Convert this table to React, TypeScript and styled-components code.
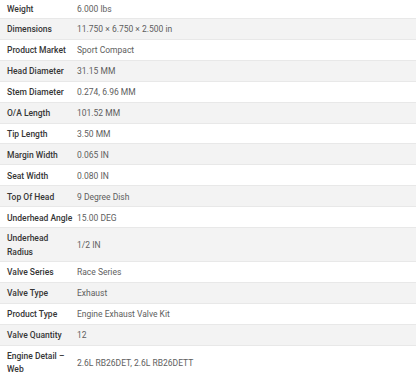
import React from "react";
import styled, { createGlobalStyle } from "styled-components";

const GlobalStyle = createGlobalStyle`
  html, body {
    margin: 0;
    padding: 0;
    background: #ffffff;
  }
  body {
    font-family: Roboto, "Liberation Sans", sans-serif;
    overflow: hidden;
  }
`;

const SpecList = styled.div`
  display: flex;
  flex-direction: column;
  margin-top: -1.9px;
  font-size: 8.5px;
  line-height: 13.1px;
`;

const Row = styled.div<{ $shaded: boolean }>`
  display: grid;
  grid-template-columns: 77px 1fr;
  align-items: center;
  padding: 4.4px 0 2.43px;
  background: ${(p) => (p.$shaded ? "#f3f3f3" : "#ffffff")};
  border-bottom: 1px solid #e8e8e8;
`;

const Label = styled.div`
  padding: 0 4px 0 7px;
  font-weight: 500;
  color: #363636;
`;

const Value = styled.div`
  padding-right: 7px;
  color: #5e5e5e;
`;

const specs: [string, string][] = [
  ["Weight", "6.000 lbs"],
  ["Dimensions", "11.750 × 6.750 × 2.500 in"],
  ["Product Market", "Sport Compact"],
  ["Head Diameter", "31.15 MM"],
  ["Stem Diameter", "0.274, 6.96 MM"],
  ["O/A Length", "101.52 MM"],
  ["Tip Length", "3.50 MM"],
  ["Margin Width", "0.065 IN"],
  ["Seat Width", "0.080 IN"],
  ["Top Of Head", "9 Degree Dish"],
  ["Underhead Angle", "15.00 DEG"],
  ["Underhead Radius", "1/2 IN"],
  ["Valve Series", "Race Series"],
  ["Valve Type", "Exhaust"],
  ["Product Type", "Engine Exhaust Valve Kit"],
  ["Valve Quantity", "12"],
  ["Engine Detail – Web", "2.6L RB26DET, 2.6L RB26DETT"],
];

export default function App() {
  return (
    <>
      <GlobalStyle />
      <SpecList>
        {specs.map(([label, value], i) => (
          <Row key={label} $shaded={i % 2 === 1}>
            <Label>{label}</Label>
            <Value>{value}</Value>
          </Row>
        ))}
      </SpecList>
    </>
  );
}
